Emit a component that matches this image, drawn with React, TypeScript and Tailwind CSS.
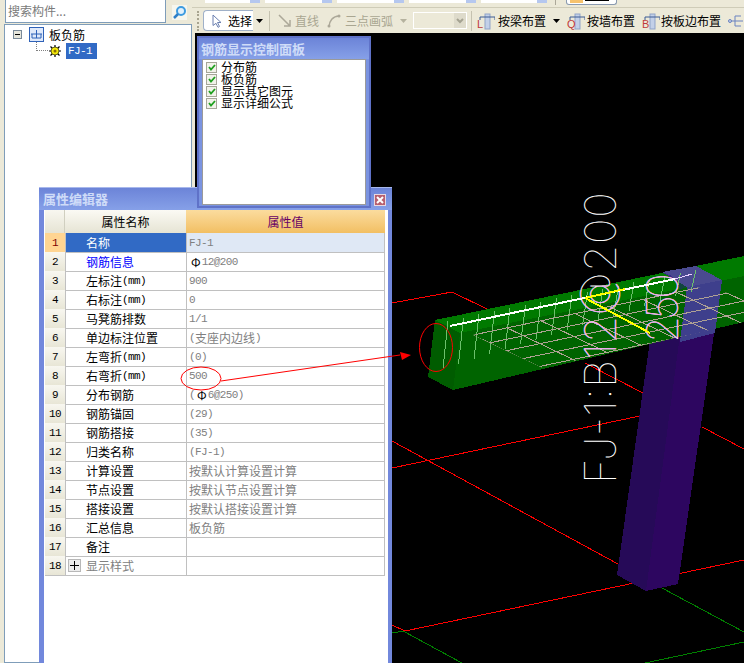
import React from "react";

const rows: { name: string; value: string; blue?: boolean }[] = [
  { name: "名称", value: "FJ-1" },
  { name: "钢筋信息", value: "Φ12@200", blue: true },
  { name: "左标注(mm)", value: "900" },
  { name: "右标注(mm)", value: "0" },
  { name: "马凳筋排数", value: "1/1" },
  { name: "单边标注位置", value: "(支座内边线)" },
  { name: "左弯折(mm)", value: "(0)" },
  { name: "右弯折(mm)", value: "500" },
  { name: "分布钢筋", value: "(Φ6@250)" },
  { name: "钢筋锚固", value: "(29)" },
  { name: "钢筋搭接", value: "(35)" },
  { name: "归类名称", value: "(FJ-1)" },
  { name: "计算设置", value: "按默认计算设置计算" },
  { name: "节点设置", value: "按默认节点设置计算" },
  { name: "搭接设置", value: "按默认搭接设置计算" },
  { name: "汇总信息", value: "板负筋" },
  { name: "备注", value: "" },
  { name: "显示样式", value: "" },
];

// digits in the old UI are 6px wide, CJK 12px, so split the runs
const Mixed = ({ text }: { text: string }) => (
  <>
    {text.split(/([\x20-\x7e]+|Φ)/).map((part, i) =>
      part === "Φ" ? (
        <span key={i} className="text-black text-[12px] ml-[2px] mr-px">
          {part}
        </span>
      ) : /^[\x20-\x7e]+$/.test(part) ? (
        <span key={i} className="font-['Liberation_Mono',monospace] text-[11px] tracking-[-0.6px]">
          {part}
        </span>
      ) : (
        <span key={i}>{part}</span>
      )
    )}
  </>
);

const LayoutIcon = ({ letter }: { letter: string }) => (
  <svg width="18" height="18" viewBox="0 0 18 18" className="shrink-0">
    <rect x="8" y="2" width="5" height="15" fill="#c3d0e8" stroke="#8fa3c8" />
    <path d="M3 5h15M3 5v3M18 5v3" stroke="#3b5a94" strokeWidth="1" fill="none" />
    <text x="0" y="16" fontSize="11" fill="#c0393b" fontFamily="Liberation Sans, sans-serif">
      {letter}
    </text>
  </svg>
);

const Caret = ({ color = "#000" }: { color?: string }) => (
  <svg width="7" height="4" viewBox="0 0 7 4" className="shrink-0">
    <path d="M0 0h7L3.500 4z" fill={color} />
  </svg>
);

const Combo = ({ width }: { width: string }) => (
  <div className={`${width} h-[3px] bg-white flex justify-end`}>
    <div className="w-[10px] h-full bg-[#b5c7ef]" />
  </div>
);

const Toolbar = () => (
  <div className="h-[33px] shrink-0 flex flex-col">
    <div className="h-[8px] shrink-0 flex gap-[5px] pl-[13px] border-b border-[#cfccb8] relative">
      <Combo width="w-[55px]" />
      <Combo width="w-[67px]" />
      <Combo width="w-[67px]" />
      <Combo width="w-[67px]" />
      <Combo width="w-[66px]" />
      <div className="w-px h-[5px] bg-[#aca899] ml-[3px]" />
      <div className="ml-[5px] w-[51px] h-[5px] bg-white border-x border-b border-[#8a9ab0] rounded-b-[3px] flex gap-[2px] px-[3px] overflow-hidden">
        <div className="w-[13px] h-[3px] bg-[#f6c26d]" />
        <div className="w-[24px] h-[1px] bg-black" />
      </div>
    </div>
    <div className="h-[25px] flex items-center text-[12px] text-black whitespace-nowrap font-['Noto_Sans_CJK_SC',sans-serif]">
      <div className="ml-[5px] w-[3px] h-[20px] border-l-2 border-dotted border-[#a8a490]" />
      <div className="ml-[3px] w-[50px] h-[21px] bg-white border border-r-0 border-[#9fb0c8] rounded-l-[4px] flex items-center">
        <svg width="12" height="14" viewBox="0 0 12 14" className="ml-[7px]">
          <path d="M2 1l8 7.500H6.500l2 4-1.500.8-2-4L2 11.500z" fill="#fff" stroke="#6a7fb0" />
        </svg>
        <span className="ml-[5px]">选择</span>
      </div>
      <div className="ml-[3px]">
        <Caret />
      </div>
      <div className="ml-[6px] w-px h-[20px] bg-[#c5c2b0]" />
      <svg width="13" height="14" viewBox="0 0 13 14" className="ml-[8px]">
        <path d="M1 1l11 11M12 6v6H6" stroke="#aca899" strokeWidth="1.500" fill="none" />
      </svg>
      <span className="ml-[4px] text-[#a9a691]">直线</span>
      <svg width="14" height="14" viewBox="0 0 14 14" className="ml-[8px]">
        <path d="M2 13C2 7 6 2 12 2" stroke="#aca899" strokeWidth="1.500" fill="none" />
        <circle cx="2" cy="12" r="1.500" fill="#aca899" />
        <circle cx="12" cy="2" r="1.500" fill="#aca899" />
      </svg>
      <span className="ml-[4px] text-[#a9a691]">三点画弧</span>
      <div className="ml-[7px]">
        <Caret color="#b5b29e" />
      </div>
      <div className="ml-[6px] w-[54px] h-[17px] border border-white bg-[#ece9d8] flex justify-end">
        <div className="w-[12px] bg-[#dedbcb] flex items-center justify-center">
          <svg width="8" height="6" viewBox="0 0 8 6">
            <path d="M1 1l3 3 3-3" stroke="#a5a392" strokeWidth="2" fill="none" />
          </svg>
        </div>
      </div>
      <div className="ml-[4px] w-px h-[20px] bg-[#c5c2b0]" />
      <div className="ml-[5px]">
        <LayoutIcon letter="L" />
      </div>
      <span className="ml-[3px]">按梁布置</span>
      <div className="ml-[7px]">
        <Caret />
      </div>
      <div className="ml-[7px]">
        <LayoutIcon letter="Q" />
      </div>
      <span className="ml-[2px]">按墙布置</span>
      <div className="ml-[7px]">
        <LayoutIcon letter="B" />
      </div>
      <span className="ml-[1px]">按板边布置</span>
      <svg width="15" height="14" viewBox="0 0 15 14" className="ml-[7px] shrink-0">
        <path d="M2 7h13M7 2h6M7 12h6M7 2v10" stroke="#6b83c0" fill="none" />
        <circle cx="2" cy="7" r="1.500" fill="#c3d0e8" stroke="#6b83c0" />
      </svg>
    </div>
  </div>
);

const Sidebar = () => (
  <div className="w-[192px] shrink-0 flex flex-col">
    <div className="h-[24px] shrink-0 flex items-start pl-[5px]">
      <div className="w-[161px] h-[23px] bg-white border border-[#7f9db9] border-t-0 pl-[2px] flex items-center text-[12px] text-[#7a7a7a] font-['Noto_Sans_CJK_SC',sans-serif]">
        搜索构件...
      </div>
      <svg width="15" height="15" viewBox="0 0 15 15" className="ml-[6px] mt-[5px]">
        <rect width="15" height="15" fill="#f6f6ee" />
        <circle cx="9" cy="6" r="4" fill="#e0f0fc" stroke="#3d9be0" strokeWidth="2" />
        <path d="M6 9l-4 4" stroke="#2f7fc8" strokeWidth="2.500" />
      </svg>
    </div>
    <div className="flex-1 ml-[4px] bg-white border border-[#7f9db9] text-[12px] text-black font-['Noto_Sans_CJK_SC',sans-serif]">
      <div className="h-[17px] mt-[1px] flex items-center">
        <div className="ml-[8px] w-[9px] h-[9px] border border-[#7a8a99] bg-[#e6e6dc] flex items-center justify-center">
          <div className="w-[5px] h-px bg-black" />
        </div>
        <svg width="15" height="15" viewBox="0 0 15 15" className="ml-[7px]">
          <rect x="0.500" y="0.500" width="14" height="14" fill="#dfe9fa" stroke="#2f62b8" />
          <path d="M2 7h11M3 7v4M12 7v4M7.500 3v8M3 11h9" stroke="#2f62b8" fill="none" />
        </svg>
        <span className="ml-[5px]">板负筋</span>
      </div>
      <div className="h-[16px] flex items-center relative">
        <div className="absolute left-[31px] top-[-1px] w-[12px] h-[9px] border-l border-b border-dotted border-[#808080]" />
        <svg width="12" height="12" viewBox="0 0 12 12" className="ml-[44px]">
          <path d="M6 0v12M0 6h12M1.500 1.500l9 9M10.500 1.500l-9 9" stroke="#000" strokeWidth="1.200" />
          <circle cx="6" cy="6" r="4" fill="#f5e90a" stroke="#000" strokeWidth="0.600" />
          <circle cx="6" cy="6" r="1.500" fill="#8a7000" />
        </svg>
        <span className="ml-[5px] w-[31px] h-[16px] bg-[#316ac5] text-white flex items-center pl-[2px]">
          <Mixed text="FJ-1" />
        </span>
      </div>
    </div>
  </div>
);

const ControlPanel = () => (
  <div className="absolute left-[197px] top-[36px] w-[174px] h-[172px] bg-[#7a93e0] border-2 border-[#5f72c8] flex flex-col font-['Noto_Sans_CJK_SC',sans-serif]">
    <div className="h-[21px] shrink-0 pl-[2px] flex items-center text-[13px] font-bold text-[#cfdcf8] bg-gradient-to-b from-[#6c84d8] to-[#86a0e8]">
      钢筋显示控制面板
    </div>
    <div className="mx-[3px] h-[146px] bg-white border border-[#9a9a9a] pl-[3px] pt-[1px] text-[12px] leading-[12px] text-black">
      {["分布筋", "板负筋", "显示其它图元", "显示详细公式"].map((label) => (
        <div key={label} className="h-[12px] flex items-center">
          <div className="w-[11px] h-[11px] bg-[#f2f2ea] border border-[#a6a698] flex items-center justify-center">
            <svg width="8" height="7" viewBox="0 0 8 7">
              <path d="M1 3l2 2.500L7 1" stroke="#1fa01f" strokeWidth="1.800" fill="none" />
            </svg>
          </div>
          <span className="ml-[4px]">{label}</span>
        </div>
      ))}
    </div>
  </div>
);

const PropertyEditor = () => (
  <div className="absolute left-[39px] top-[187px] w-[353px] h-[476px] bg-[#7288dc] border-t border-[#a8b8ec] flex flex-col font-['Noto_Sans_CJK_SC',sans-serif]">
    <div className="h-[22px] shrink-0 relative flex items-center pl-[4px] text-[13px] font-bold text-[#cfdcf8] bg-gradient-to-b from-[#6c84d8] to-[#86a0e8]">
      属性编辑器
      <div className="absolute left-[335px] top-[6px] w-[12px] h-[12px] bg-[#b8606f] border border-[#e8d8e0] flex items-center justify-center">
        <svg width="8" height="8" viewBox="0 0 8 8">
          <path d="M1 1l6 6M7 1L1 7" stroke="#fff" strokeWidth="2" />
        </svg>
      </div>
    </div>
    <div className="flex-1 ml-[5px] mr-[4px] pl-px bg-white text-[12px] text-black">
      <div className="grid grid-cols-[20px_121px_199px] h-[23px]">
        <div className="bg-gradient-to-b from-[#f8f7f0] to-[#e6e4d4] border-r border-[#d0cfc0]" />
        <div className="flex items-center justify-center bg-gradient-to-b from-[#fbfaf4] to-[#e6e4d4]">属性名称</div>
        <div className="flex items-center justify-center bg-gradient-to-b from-[#fbdc9e] to-[#f2bf62] text-[#660066]">属性值</div>
      </div>
      {rows.map((row, i) => {
        const first = i === 0;
        return (
          <div key={row.name} className="grid grid-cols-[20px_121px_199px] h-[19px]">
            <div
              className={`flex items-center justify-center border-b border-[#c0c0c0] pt-px ${
                first ? "bg-[#ffd592] text-[#800000]" : "bg-gradient-to-b from-[#f8f7f0] to-[#e8e6d6]"
              }`}
            >
              <Mixed text={String(i + 1)} />
            </div>
            <div
              className={`flex items-center border-b border-l border-[#c0c0c0] pl-[20px] pt-px relative ${
                first ? "bg-[#316ac5] text-white" : row.blue ? "text-[#0000ff]" : i === 17 ? "text-[#808080]" : ""
              }`}
            >
              {i === 17 && (
                <div className="absolute left-[2px] top-[3px] w-[13px] h-[13px] bg-[#ececec] border border-[#b8b8b8] flex items-center justify-center text-black">
                  <svg width="9" height="9" viewBox="0 0 9 9">
                    <path d="M4.500 0v9M0 4.500h9" stroke="#000" />
                  </svg>
                </div>
              )}
              <Mixed text={row.name} />
            </div>
            <div
              className={`flex items-center border-b border-l border-r border-[#c0c0c0] pl-[2px] pt-px text-[#808080] ${
                first ? "bg-[#dfe8f5]" : ""
              }`}
            >
              <Mixed text={row.value} />
            </div>
          </div>
        );
      })}
    </div>
  </div>
);

const beam = "435,320 744,256 744,322 453,390 428,377";
const xs = Array.from({ length: 17 }, (_, i) => 443 + i * 15.500);

const Scene = () => (
  <svg viewBox="195 33 549 630" className="w-full h-full block" shapeRendering="crispEdges">
    <defs>
      <clipPath id="beam-clip">
        <polygon points={beam} />
      </clipPath>
      <clipPath id="mesh-clip">
        <polygon points="473,335 585,300 690,286 744,296 744,322 543,368" />
      </clipPath>
    </defs>
    <g fill="none" stroke="#f00" strokeWidth="1">
      <path d="M392 303L452 292L487 309" />
      <path d="M585 363L643 393" />
      <path d="M392 468L640 416" />
      <path d="M392 441L618 564" />
      <path d="M392 625L405 631" />
      <path d="M405 631L744 560" />
      <path d="M702 427L744 449" />
    </g>
    <g fill="none" stroke="#008000" strokeWidth="1">
      <path d="M392 633L405 631" />
      <path d="M403 631L462 663" />
      <path d="M662 588L744 632" />
      <path d="M645 663L744 642" />
    </g>
    {/* column below the beam */}
    <polygon points="650,340 680,335 646,591 617,575" fill="#260a58" />
    <polygon points="680,335 715,327 678,584 646,591" fill="#2d0660" />
    {/* beam faces */}
    <polygon points="435,320 744,256 744,276 460,333" fill="#007a00" />
    <polygon points="460,333 744,276 744,322 453,390" fill="#006400" />
    <polygon points="435,320 460,333 453,390 428,377" fill="#005c00" />
    {/* column passing through, translucent */}
    <polygon points="662,272 696,266 722,280 687,287" fill="#4a4a90" />
    <polygon points="687,287 722,280 715,333 680,342" fill="#3e3f8c" />
    <polygon points="662,272 687,287 680,290 672,276" fill="#241080" opacity="0.500" />
    {/* stirrups */}
    <g stroke="#6cc06c" strokeWidth="1" fill="none">
      {xs.map((x) => (
        <path key={x} d={`M${x + 5} ${322 - (x - 438) * 0.207}L${x} ${370 - (x - 438) * 0.31}`} />
      ))}
    </g>
    {/* distribution mesh */}
    <g stroke="#b0a294" strokeWidth="1" fill="none" clipPath="url(#mesh-clip)">
      {Array.from({ length: 5 }, (_, k) => (
        <path key={k} d={`M${473 + k * 16} ${335 + k * 8}l320 -67`} />
      ))}
      {Array.from({ length: 11 }, (_, j) => (
        <path key={j} d={`M${473 + j * 34} ${335 - j * 7.100}l140 67`} />
      ))}
    </g>
    {/* stroke labels */}
    <text
      transform="translate(616 484) rotate(-90)"
      fontFamily="Inter, sans-serif"
      fontWeight="100"
      fontSize="44"
      fill="#fff"
      textLength="292"
    >
      FJ-1:B12@200
    </text>
    <text
      transform="translate(678 343) rotate(-90)"
      fontFamily="Inter, sans-serif"
      fontWeight="100"
      fontSize="44"
      fill="#fff"
      textLength="70"
    >
      250
    </text>
    <g clipPath="url(#beam-clip)">
      <text
        transform="translate(616 484) rotate(-90)"
        fontFamily="Inter, sans-serif"
        fontWeight="100"
        fontSize="44"
        fill="#f0a0f0"
        textLength="292"
      >
        FJ-1:B12@200
      </text>
      <text
        transform="translate(678 343) rotate(-90)"
        fontFamily="Inter, sans-serif"
        fontWeight="100"
        fontSize="44"
        fill="#f0a0f0"
        textLength="70"
      >
        250
      </text>
    </g>
    {/* rebar lines */}
    <path d="M450 326L675 279" stroke="#fff" strokeWidth="2" />
    <path d="M675 279L692 274" stroke="#e8d0ff" strokeWidth="1" />
    <path d="M585 298L625 289M585 298L650 333" stroke="#ff0" strokeWidth="2" />
  </svg>
);

// hand drawn markup sits over the windows
const Annotations = () => (
  <svg viewBox="0 0 744 663" className="absolute inset-0 w-full h-full pointer-events-none">
    <g fill="none" stroke="#f00" strokeWidth="1">
      <ellipse cx="201" cy="378.500" rx="20" ry="11.500" />
      <ellipse cx="436" cy="347.500" rx="16.500" ry="24" />
      <path d="M221 381L400 355" />
    </g>
    <polygon points="400,352 411,355 402,360" fill="#f00" />
  </svg>
);

export default function App() {
  return (
    <div className="relative w-[744px] h-[663px] overflow-hidden bg-[#ece9d8] flex">
      <Sidebar />
      <div className="flex-1 flex flex-col min-w-0">
        <Toolbar />
        <div className="flex-1 ml-[3px] bg-black min-h-0">
          <Scene />
        </div>
      </div>
      <PropertyEditor />
      <ControlPanel />
      <Annotations />
    </div>
  );
}
